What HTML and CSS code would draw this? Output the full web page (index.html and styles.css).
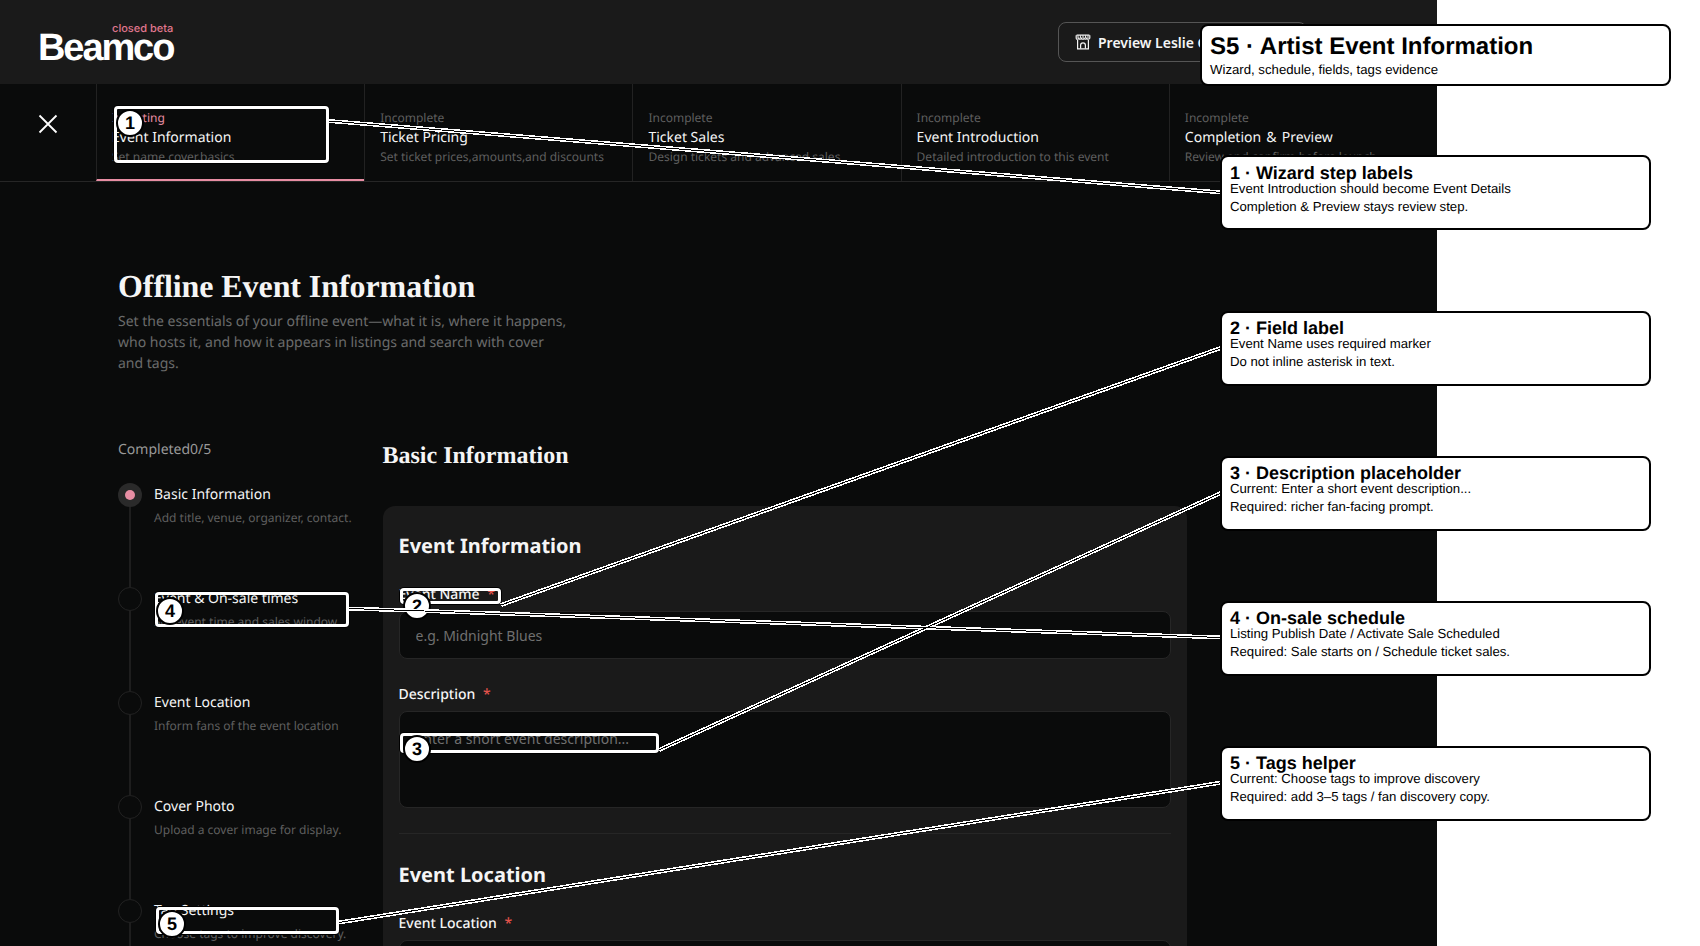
FILE: index.html
```html
<!DOCTYPE html>
<html lang="en">

<head>
    <meta charset="UTF-8">
    <title>Artist Event Information</title>
    <link rel="stylesheet" href="styles.css">
</head>

<body>
    <div class="app">
        <header class="topbar">
            <div class="logo">
                <span class="logo-tag">closed beta</span>
                <span class="logo-name">Beamco</span>
            </div>
            <button class="preview-btn">
                <svg class="store-icon" width="16" height="16" viewBox="0 0 16 16" fill="none" stroke="currentColor" stroke-width="1.2">
                    <path d="M1.6 1.2h12.8M1.2 1.2v3.2M14.8 1.2v3.2M1.2 4.4c.5 1.1 2.1 1.1 2.7 0 .5 1.1 2 1.1 2.6 0 .5 1.1 2.1 1.1 2.6 0 .6 1.1 2.1 1.1 2.7 0 .5 1.1 2.1 1.1 2.7 0"/>
                    <path d="M5.4 1.4v3M8 1.4v3M10.6 1.4v3M3 1.4v3M13 1.4v3" stroke-width="1"/>
                    <path d="M2.6 6v8.8h10.8V6"/>
                    <path d="M5.6 14.6v-3.4a2.4 2.4 0 0 1 4.8 0v3.4"/>
                </svg>
                <span>Preview Leslie Chen's Store</span>
            </button>
        </header>

        <nav class="wizard">
            <div class="close-cell">
                <svg width="20" height="20" viewBox="0 0 20 20" fill="none" stroke="#fff" stroke-width="1.8">
                    <path d="M1.5 1.5l17 17M18.5 1.5l-17 17"/>
                </svg>
            </div>
            <div class="step active">
                <span class="step-state">Inputting</span>
                <span class="step-title">Event Information</span>
                <span class="step-desc">Set name,cover,basics</span>
            </div>
            <div class="step">
                <span class="step-state">Incomplete</span>
                <span class="step-title">Ticket Pricing</span>
                <span class="step-desc">Set ticket prices,amounts,and discounts</span>
            </div>
            <div class="step">
                <span class="step-state">Incomplete</span>
                <span class="step-title">Ticket Sales</span>
                <span class="step-desc">Design tickets and advanced sales</span>
            </div>
            <div class="step">
                <span class="step-state">Incomplete</span>
                <span class="step-title">Event Introduction</span>
                <span class="step-desc">Detailed introduction to this event</span>
            </div>
            <div class="step">
                <span class="step-state">Incomplete</span>
                <span class="step-title step-title-wide">Completion &amp; Preview</span>
                <span class="step-desc">Review and confirm before launch</span>
            </div>
        </nav>

        <main class="page">
            <h1>Offline Event Information</h1>
            <p class="page-sub">Set the essentials of your offline event—what it is, where it happens, who hosts it, and how it appears in listings and search with cover and tags.</p>

            <div class="columns">
                <aside class="progress">
                    <div class="progress-count">Completed0/5</div>
                    <ul class="timeline">
                        <li class="tl-item current">
                            <span class="tl-dot"></span>
                            <div>
                                <div class="tl-title">Basic Information</div>
                                <div class="tl-desc">Add title, venue, organizer, contact.</div>
                            </div>
                        </li>
                        <li class="tl-item">
                            <span class="tl-dot"></span>
                            <div>
                                <div class="tl-title">Event &amp; On-sale times</div>
                                <div class="tl-desc">Set event time and sales window.</div>
                            </div>
                        </li>
                        <li class="tl-item">
                            <span class="tl-dot"></span>
                            <div>
                                <div class="tl-title">Event Location</div>
                                <div class="tl-desc">Inform fans of the event location</div>
                            </div>
                        </li>
                        <li class="tl-item">
                            <span class="tl-dot"></span>
                            <div>
                                <div class="tl-title">Cover Photo</div>
                                <div class="tl-desc">Upload a cover image for display.</div>
                            </div>
                        </li>
                        <li class="tl-item">
                            <span class="tl-dot"></span>
                            <div>
                                <div class="tl-title">Tag Settings</div>
                                <div class="tl-desc">Choose tags to improve discovery.</div>
                            </div>
                        </li>
                    </ul>
                </aside>

                <section class="form-col">
                    <h2>Basic Information</h2>
                    <div class="panel">
                        <h3>Event Information</h3>
                        <label class="field-label">Event Name <span class="req">*</span></label>
                        <input class="field-input" type="text" placeholder="e.g. Midnight Blues">
                        <label class="field-label">Description <span class="req">*</span></label>
                        <textarea class="field-input field-area" placeholder="Enter a short event description..."></textarea>
                        <hr class="divider">
                        <h3>Event Location</h3>
                        <label class="field-label">Event Location <span class="req">*</span></label>
                        <input class="field-input" type="text">
                    </div>
                </section>
            </div>
        </main>
    </div>

    <!-- review markup over the screenshot -->
    <div class="hl hl-1"></div>
    <div class="hl hl-2"></div>
    <div class="hl hl-3"></div>
    <div class="hl hl-4"></div>
    <div class="hl hl-5"></div>

    <span class="badge badge-1">1</span>
    <span class="badge badge-2">2</span>
    <span class="badge badge-3">3</span>
    <span class="badge badge-4">4</span>
    <span class="badge badge-5">5</span>

    <svg class="leaders" width="1700" height="946" viewBox="0 0 1700 946">
        <g class="leader-bg">
            <line x1="329" y1="121" x2="1222" y2="192.5"/>
            <line x1="501" y1="605" x2="1222" y2="347.5"/>
            <line x1="659" y1="750" x2="1222" y2="492.5"/>
            <line x1="349" y1="608.5" x2="1222" y2="637.5"/>
            <line x1="339" y1="922.5" x2="1222" y2="782.5"/>
        </g>
        <g class="leader-core">
            <line x1="329" y1="121" x2="1222" y2="192.5"/>
            <line x1="501" y1="605" x2="1222" y2="347.5"/>
            <line x1="659" y1="750" x2="1222" y2="492.5"/>
            <line x1="349" y1="608.5" x2="1222" y2="637.5"/>
            <line x1="339" y1="922.5" x2="1222" y2="782.5"/>
        </g>
    </svg>

    <div class="note note-main">
        <div class="note-head">S5 · Artist Event Information</div>
        <div class="note-text">Wizard, schedule, fields, tags evidence</div>
    </div>
    <div class="note note-1">
        <div class="note-title">1 · Wizard step labels</div>
        <div class="note-text">Event Introduction should become Event Details</div>
        <div class="note-text">Completion &amp; Preview stays review step.</div>
    </div>
    <div class="note note-2">
        <div class="note-title">2 · Field label</div>
        <div class="note-text">Event Name uses required marker</div>
        <div class="note-text">Do not inline asterisk in text.</div>
    </div>
    <div class="note note-3">
        <div class="note-title">3 · Description placeholder</div>
        <div class="note-text">Current: Enter a short event description...</div>
        <div class="note-text">Required: richer fan-facing prompt.</div>
    </div>
    <div class="note note-4">
        <div class="note-title">4 · On-sale schedule</div>
        <div class="note-text">Listing Publish Date / Activate Sale Scheduled</div>
        <div class="note-text">Required: Sale starts on / Schedule ticket sales.</div>
    </div>
    <div class="note note-5">
        <div class="note-title">5 · Tags helper</div>
        <div class="note-text">Current: Choose tags to improve discovery</div>
        <div class="note-text">Required: add 3–5 tags / fan discovery copy.</div>
    </div>
</body>

</html>
```

FILE: styles.css
```css
* {
    box-sizing: border-box;
}

html,
body {
    margin: 0;
    padding: 0;
    height: 946px;
    overflow: hidden;
    background-color: #ffffff;
}

body {
    position: relative;
    font-family: "Noto Sans", sans-serif;
    text-rendering: geometricPrecision;
}

.app {
    width: 1437px;
    height: 946px;
    overflow: hidden;
    background-color: #0a0b0b;
    color: #f5f5f5;
}

/* top bar */
.topbar {
    display: flex;
    align-items: center;
    justify-content: space-between;
    height: 84px;
    padding: 0 130px 0 38px;
    background-color: #1a1a1a;
}

.logo {
    display: flex;
    flex-direction: column;
    align-items: flex-end;
    margin-top: 4px;
}

.logo-tag {
    margin-bottom: -4px;
    font-family: Inter, "Liberation Sans", sans-serif;
    font-size: 11px;
    line-height: 12px;
    font-weight: 500;
    color: #e0778f;
}

.logo-name {
    font-family: "Liberation Sans", Arial, sans-serif;
    font-size: 38px;
    line-height: 36px;
    font-weight: 700;
    letter-spacing: -2.1px;
    color: #ffffff;
}

.preview-btn {
    display: flex;
    align-items: center;
    gap: 7px;
    width: 249px;
    height: 40px;
    padding: 0 16px;
    font-family: inherit;
    font-size: 14px;
    font-weight: 600;
    color: #f5f5f5;
    white-space: nowrap;
    background: transparent;
    border: 1px solid #555;
    border-radius: 8px;
}

.store-icon {
    flex: none;
}

/* wizard steps */
.wizard {
    display: flex;
    height: 98px;
    border-bottom: 1px solid #262626;
}

.close-cell {
    display: flex;
    align-items: center;
    justify-content: center;
    flex: none;
    width: 96px;
    padding-bottom: 18px;
}

.step {
    display: flex;
    flex-direction: column;
    flex: 1;
    min-width: 0;
    height: 97px;
    padding: 25px 16px 0 15px;
    border-left: 1px solid #222;
}

.step.active {
    border-bottom: 2px solid #e88ea4;
}

.step-state {
    font-size: 12px;
    line-height: 18px;
    color: #5f5f5f;
}

.active .step-state {
    color: #e88ea4;
}

.step-title {
    margin-top: 1px;
    font-size: 14px;
    line-height: 20px;
    color: #f5f5f5;
}

.step-title-wide {
    word-spacing: 1.6px;
}

.step-desc {
    font-size: 12px;
    line-height: 18px;
    color: #5f5f5f;
    white-space: nowrap;
}

/* page */
.page {
    padding: 84px 0 0 118px;
}

h1 {
    margin: 0;
    font-family: "Liberation Serif", "Times New Roman", serif;
    font-size: 32px;
    line-height: 40px;
    font-weight: 700;
    letter-spacing: -0.08px;
    color: #f5f5f5;
}

.page-sub {
    width: 452px;
    margin: 5px 0 0;
    font-size: 14px;
    line-height: 21px;
    color: #6b6b6b;
}

.columns {
    display: flex;
    margin-top: 65px;
}

.progress {
    flex: none;
    width: 264.5px;
}

.progress-count {
    margin-top: 1px;
    font-size: 14px;
    line-height: 20px;
    color: #999;
}

.timeline {
    margin: 23px 0 0;
    padding: 0;
    list-style: none;
}

.tl-item {
    position: relative;
    display: grid;
    grid-template-columns: 24px 1fr;
    gap: 12px;
    height: 104px;
}

.tl-item::before {
    content: "";
    position: absolute;
    left: 11px;
    top: 24px;
    bottom: 0;
    width: 2px;
    background-color: #1e1e1e;
}

.tl-dot {
    position: relative;
    width: 24px;
    height: 24px;
    border: 1px solid #222;
    border-radius: 50%;
}

.current .tl-dot {
    background-color: #2a2a2a;
    border: none;
}

.current .tl-dot::after {
    content: "";
    position: absolute;
    left: 7px;
    top: 7px;
    width: 10px;
    height: 10px;
    border-radius: 50%;
    background-color: #e88ea4;
}

.tl-title {
    margin-top: 2px;
    font-size: 14px;
    line-height: 20px;
    color: #f5f5f5;
}

.tl-desc {
    margin-top: 4px;
    font-size: 12px;
    line-height: 18px;
    color: #5f5f5f;
    white-space: nowrap;
}

.form-col {
    flex: none;
    width: 804px;
}

h2 {
    margin: 1px 0 0;
    font-family: "Liberation Serif", "Times New Roman", serif;
    font-size: 24px;
    line-height: 32px;
    font-weight: 700;
    color: #f5f5f5;
}

.panel {
    margin-top: 34px;
    padding: 26px 16px 40px;
    background-color: #1a1a1a;
    border-radius: 12px;
}

h3 {
    margin: 0;
    font-size: 20px;
    line-height: 28px;
    font-weight: 700;
    color: #f5f5f5;
}

.field-label {
    display: block;
    margin-top: 25px;
    font-size: 14px;
    line-height: 20px;
    font-weight: 500;
    color: #f5f5f5;
}

.req {
    margin-left: 4px;
    color: #e5534b;
}

.field-input {
    display: block;
    width: 100%;
    height: 48px;
    margin-top: 6px;
    padding: 0 16px;
    font-family: inherit;
    font-size: 14px;
    color: #f5f5f5;
    background-color: #0a0b0b;
    border: 1px solid #262626;
    border-radius: 8px;
    outline: none;
    resize: none;
}

.field-input::placeholder {
    color: #707070;
}

.field-area {
    height: 97px;
    padding: 17px 16px;
    line-height: 20px;
}

.field-input + .field-label {
    margin-top: 26px;
}

.divider {
    height: 1px;
    margin: 25px 0 27px;
    border: none;
    background-color: #262626;
}

/* review markup */
.hl {
    position: absolute;
    border: 3px solid #fff;
    border-radius: 4px;
    box-shadow: 0 0 0 1px #000;
}

.hl-1 {
    left: 114px;
    top: 106px;
    width: 215px;
    height: 57px;
}

.hl-2 {
    left: 400px;
    top: 588px;
    width: 101px;
    height: 16px;
}

.hl-3 {
    left: 400px;
    top: 733px;
    width: 259px;
    height: 20px;
}

.hl-4 {
    left: 155px;
    top: 592px;
    width: 194px;
    height: 35px;
}

.hl-5 {
    left: 156px;
    top: 907px;
    width: 183px;
    height: 27px;
}

.leaders {
    position: absolute;
    left: 0;
    top: 0;
    shape-rendering: crispEdges;
}

.leader-bg line {
    stroke: #fff;
    stroke-width: 4;
}

.leader-core line {
    stroke: #000;
    stroke-width: 1;
}

.badge {
    position: absolute;
    display: flex;
    align-items: center;
    justify-content: center;
    width: 28px;
    height: 28px;
    font-family: "Liberation Sans", Arial, sans-serif;
    font-size: 18px;
    font-weight: 700;
    color: #000;
    background-color: #fff;
    border: 2px solid #000;
    border-radius: 50%;
}

.badge-1 {
    left: 116px;
    top: 109px;
}

.badge-2 {
    left: 403px;
    top: 592px;
}

.badge-3 {
    left: 403px;
    top: 735px;
}

.badge-4 {
    left: 156px;
    top: 597px;
}

.badge-5 {
    left: 158px;
    top: 910px;
}

.note {
    position: absolute;
    left: 1220px;
    width: 431px;
    height: 75px;
    padding: 8px;
    font-family: "Liberation Sans", Arial, sans-serif;
    color: #000;
    background-color: #fff;
    border: 2px solid #000;
    border-radius: 8px;
}

.note-main {
    left: 1200px;
    top: 24px;
    width: 471px;
    height: 62px;
}

.note-1 {
    top: 155px;
    padding-top: 9px;
}

.note-2 {
    top: 311px;
}

.note-3 {
    top: 456px;
}

.note-4 {
    top: 601px;
}

.note-5 {
    top: 746px;
}

.note-head {
    margin-top: 1px;
    font-size: 24px;
    line-height: 24px;
    font-weight: 700;
}

.note-head + .note-text {
    margin-top: 2px;
}

.note-title {
    font-size: 18px;
    line-height: 14px;
    font-weight: 700;
}

.note-text {
    font-size: 13.2px;
    line-height: 18px;
}
```
